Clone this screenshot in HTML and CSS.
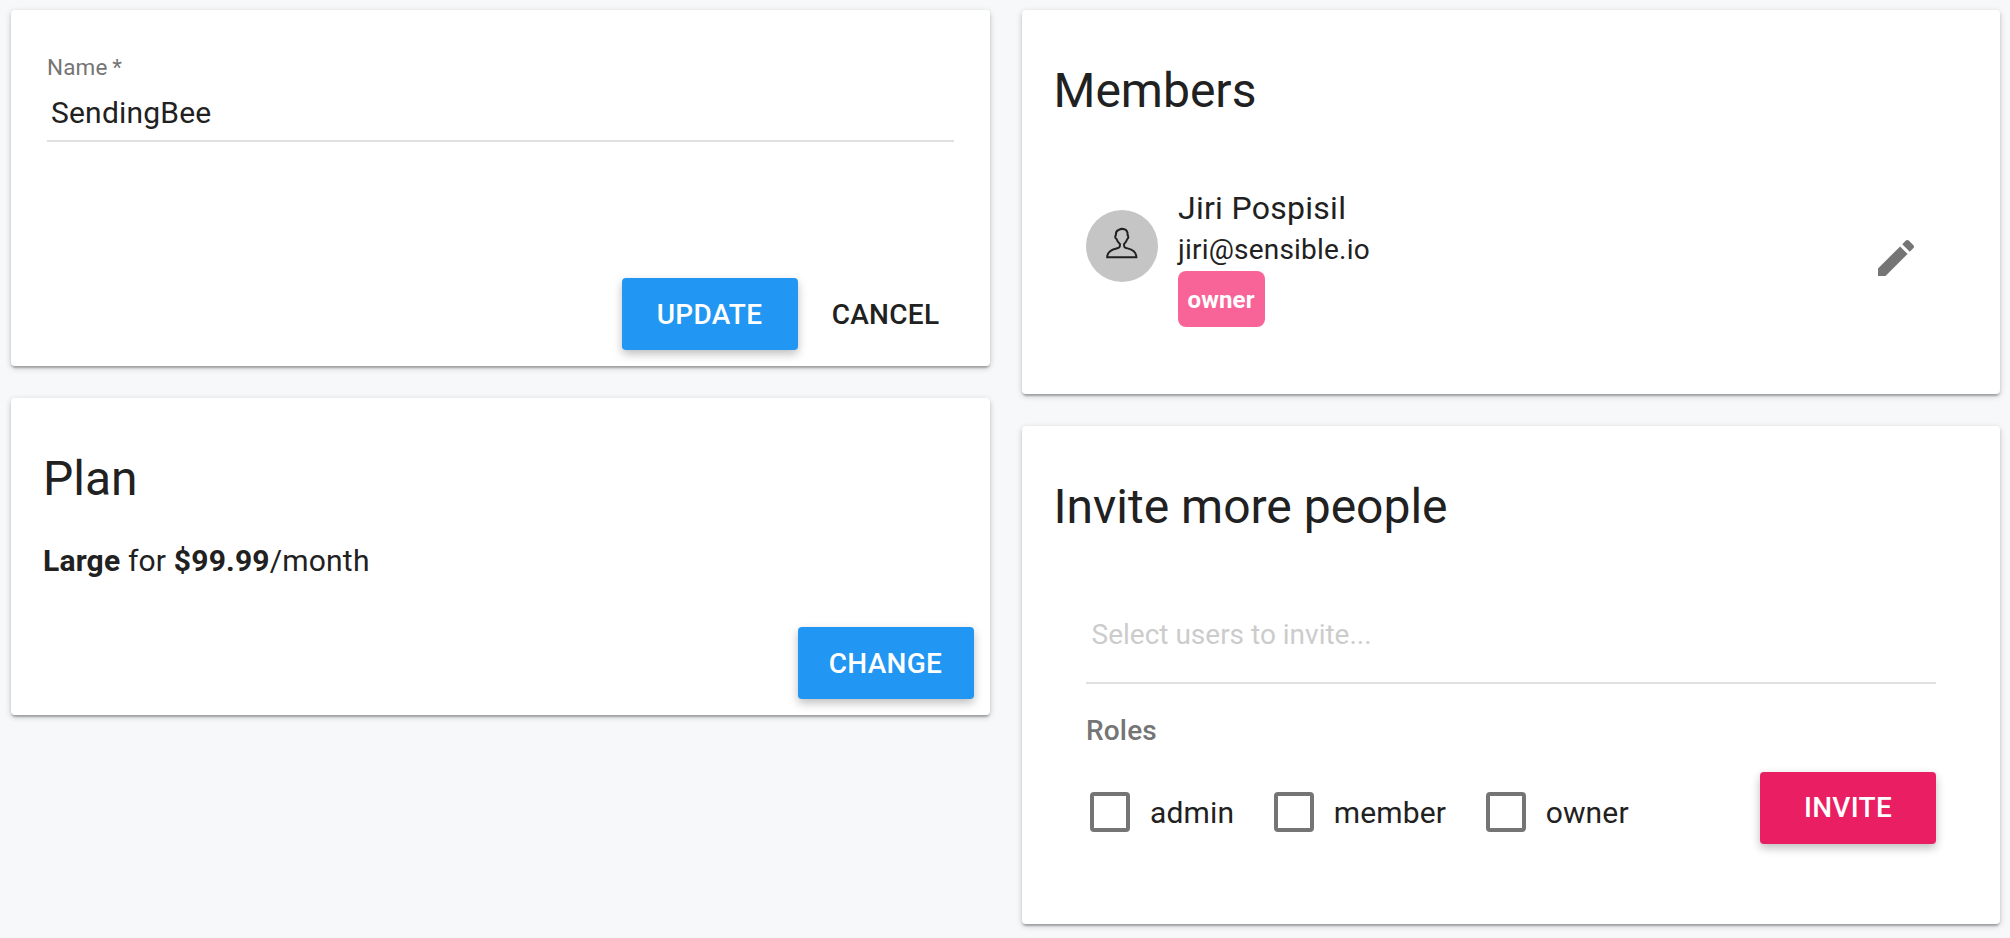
FILE: index.html
```html
<!DOCTYPE html>
<html lang="en">
<head>
<meta charset="utf-8">
<title>Team settings</title>
<link rel="stylesheet" href="styles.css">
</head>
<body>
<main class="page">
  <div class="column column-left">
    <section class="card details">
      <div class="field">
        <div class="field-label">Name *</div>
        <div class="field-value">SendingBee</div>
      </div>
      <div class="actions">
        <button class="btn btn-primary">UPDATE</button>
        <button class="btn">CANCEL</button>
      </div>
    </section>
    <section class="card plan">
      <h2 class="headline">Plan</h2>
      <p class="plan-text"><b>Large</b> for <b>$99.99</b>/month</p>
      <div class="actions">
        <button class="btn btn-primary">CHANGE</button>
      </div>
    </section>
  </div>
  <div class="column column-right">
    <section class="card members">
      <h2 class="headline">Members</h2>
      <div class="member">
        <div class="avatar">
          <svg width="72" height="72" viewBox="0 0 72 72" fill="none" stroke="#212121" stroke-width="2" stroke-linejoin="miter"><path d="M21.2 47.2C21.2 41.5 26 39.4 30.5 38.4C33.8 37.6 34 37 34 34.2C31.5 32 31 30.5 30.5 29C29 28 28.8 26.2 29.9 25.3C29.6 21 31.1 20.4 32.6 20C35.3 18.2 42.2 18 41.6 25.3C42.6 26.2 42.6 28 41.3 29C40.8 30.5 40.3 32 38 34.2C38 37 38.2 37.6 41.5 38.4C46 39.4 50.2 41.5 50.4 47.2Z"/></svg>
        </div>
        <div class="member-info">
          <div class="member-name">Jiri Pospisil</div>
          <div class="member-email">jiri@sensible.io</div>
          <span class="badge">owner</span>
        </div>
        <svg class="edit" viewBox="0 0 24 24"><path d="M3 17.25V21h3.75L17.81 9.94l-3.75-3.75L3 17.25zM20.71 7.04c.39-.39.39-1.02 0-1.41l-2.34-2.34c-.39-.39-1.02-.39-1.41 0l-1.83 1.83 3.75 3.75 1.83-1.83z"/></svg>
      </div>
    </section>
    <section class="card invite">
      <h2 class="headline">Invite more people</h2>
      <div class="invite-form">
        <div class="chips">Select users to invite...</div>
        <div class="roles-title">Roles</div>
        <div class="roles-row">
          <div class="roles">
            <label class="role"><span class="box"></span>admin</label>
            <label class="role"><span class="box"></span>member</label>
            <label class="role"><span class="box"></span>owner</label>
          </div>
          <button class="btn btn-accent">INVITE</button>
        </div>
      </div>
    </section>
  </div>
</main>
</body>
</html>
```
FILE: styles.css
```css
* { box-sizing: border-box; }
body {
  margin: 0;
  background: #f6f8fa;
  color: #212121;
  font-family: Roboto, "Liberation Sans", sans-serif;
  letter-spacing: 0.16px;
}
.page {
  display: flex;
  gap: 32px;
  align-items: flex-start;
  height: 938px;
  padding: 10px 10px 0 11px;
}
.column { display: flex; flex-direction: column; gap: 32px; }
.column-left { width: 979px; }
.column-right { width: 978px; }
.card {
  background: #fff;
  border-radius: 4px;
  box-shadow: 0 2px 6px rgba(0,0,0,.2), 0 2px 2px rgba(0,0,0,.14), 0 4px 2px -2px rgba(0,0,0,.12);
}
.headline { margin: 0; font-size: 48px; line-height: 64px; font-weight: 400; letter-spacing: 0; }
.actions { display: flex; justify-content: flex-end; padding: 0 16px 16px; }
.btn {
  width: 176px;
  height: 72px;
  padding: 2px 1px 0 0;
  border: 0;
  border-radius: 4px;
  background: transparent;
  color: #212121;
  font: 500 28px/70px Roboto, "Liberation Sans", sans-serif;
  letter-spacing: 0.28px;
}
.btn-primary, .btn-accent { color: #fff; box-shadow: 0 4px 10px rgba(0,0,0,.26); }
.btn-primary { background: #2196f3; }
.btn-accent { padding: 0; background: #e91e63; }

.details { padding-top: 42px; }
.field { margin: 0 36px 136px; border-bottom: 2px solid #e0e0e0; }
.field-label { margin-bottom: 11px; font-size: 22.5px; line-height: 30px; color: #757575; word-spacing: -1px; }
.field-value { padding: 0 4px 7px; font-size: 30px; line-height: 40px; letter-spacing: 0.2px; }

.plan { padding-top: 49px; }
.plan .headline { padding-left: 32px; }
.plan-text { margin: 30px 32px 46px; font-size: 30px; line-height: 40px; letter-spacing: 0.19px; }

.members { padding: 49px 80px 67px 32px; }
.members .headline, .invite .headline { margin-left: -0.5px; }
.member { display: flex; align-items: flex-start; padding: 65px 0 0 32px; }
.avatar { width: 72px; height: 72px; margin: 22px 20px 0 0; border-radius: 50%; background: #c5c5c5; }
.member-info { display: flex; flex-direction: column; align-items: flex-start; flex: 1; }
.member-name { font-size: 32px; line-height: 40px; letter-spacing: 0.28px; }
.member-email { margin: 4px 0 3px; font-size: 28px; line-height: 36px; letter-spacing: 0.21px; }
.badge {
  width: 87px;
  height: 56px;
  padding-left: 9.5px;
  border-radius: 8px;
  background: #f96498;
  color: #fff;
  font-size: 24px;
  line-height: 58px;
  font-weight: 700;
}
.edit { width: 48px; height: 48px; margin-top: 46px; fill: #757575; }

.invite { padding: 49px 32px 80px; }
.invite-form { padding: 76px 32px 0; }
.chips { padding: 0 5.5px 27px; border-bottom: 2px solid #e0e0e0; font-size: 28px; line-height: 40px; color: #ccc; letter-spacing: 0; }
.roles-title { margin: 31px 0 25px; font-size: 28px; line-height: 32px; font-weight: 500; color: #757575; }
.roles-row { display: flex; justify-content: space-between; align-items: flex-start; }
.roles { display: flex; gap: 39.5px; padding: 20px 0 0 4px; }
.role { display: flex; gap: 20px; font-size: 30px; line-height: 41px; height: 40px; }
.box { width: 40px; height: 40px; border: 4px solid #757575; border-radius: 4px; }
```
